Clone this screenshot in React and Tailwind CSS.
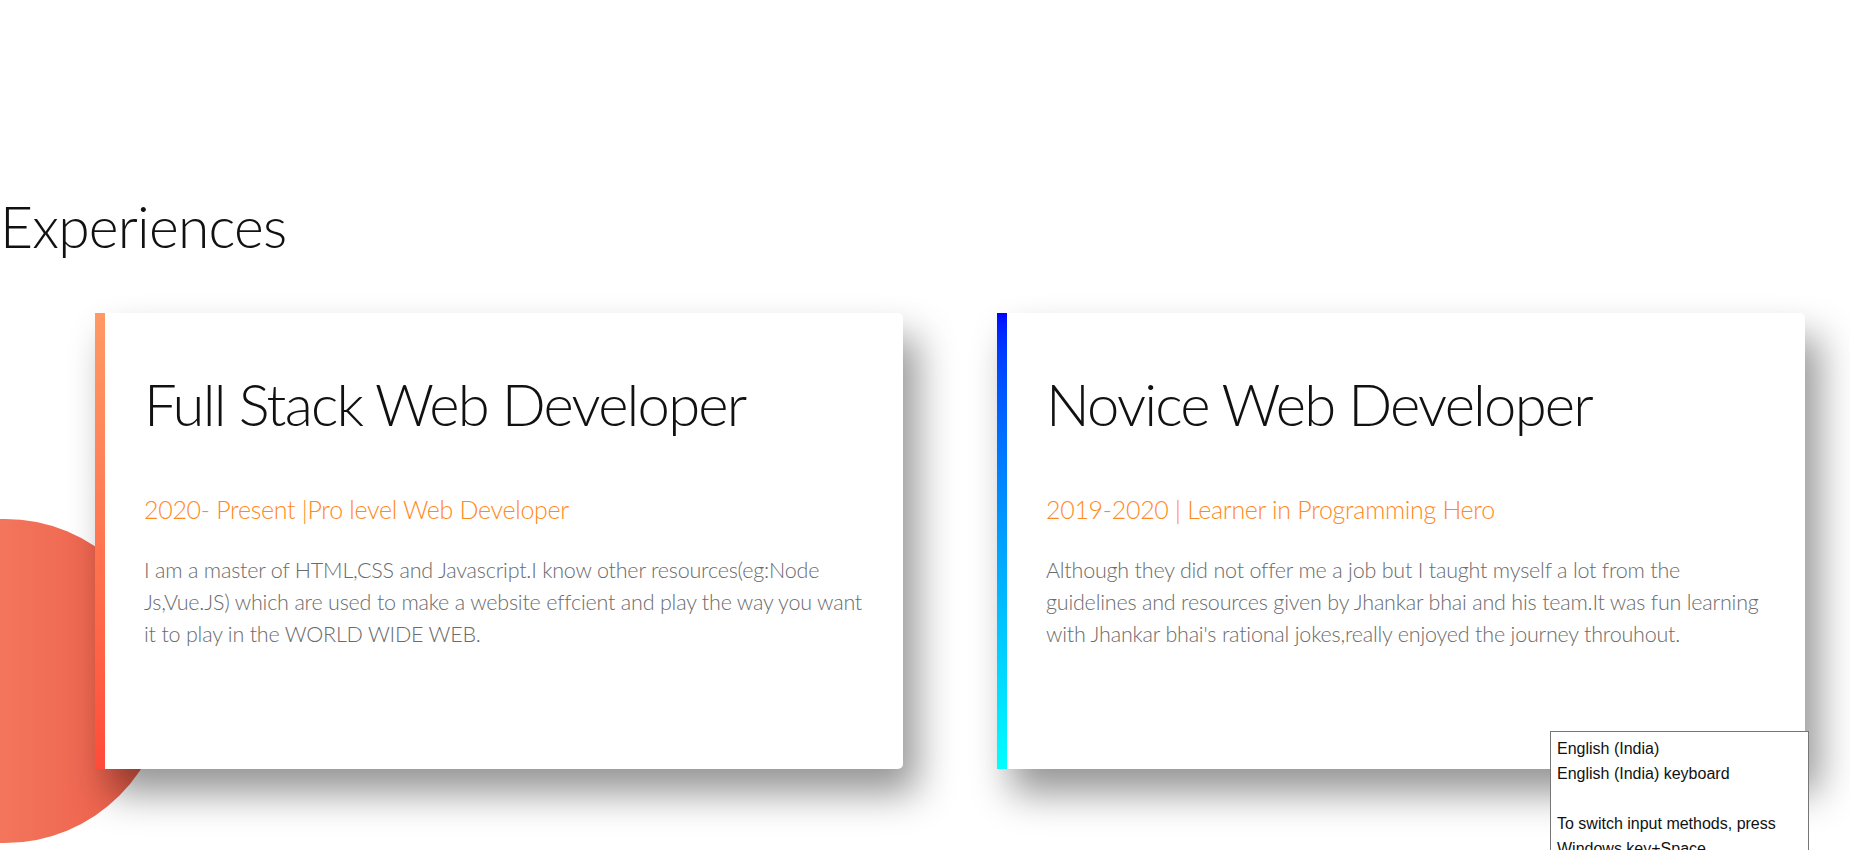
import React from 'react';

const experiences = [
    {
        title: 'Full Stack Web Developer',
        period: '2020- Present |Pro level Web Developer',
        lines: [
            'I am a master of HTML,CSS and Javascript.I know other resources(eg:Node',
            'Js,Vue.JS) which are used to make a website effcient and play the way you want',
            'it to play in the WORLD WIDE WEB.',
        ],
        bar: 'bg-gradient-to-b from-[#ff9966] to-[#ff4b3a]',
    },
    {
        title: 'Novice Web Developer',
        period: '2019-2020 | Learner in Programming Hero',
        lines: [
            'Although they did not offer me a job but I taught myself a lot from the',
            'guidelines and resources given by Jhankar bhai and his team.It was fun learning',
            "with Jhankar bhai's rational jokes,really enjoyed the journey throuhout.",
        ],
        bar: 'bg-gradient-to-b from-[#0000ff] to-[#00ffff]',
    },
];

function ExperienceCard({ item }) {
    return (
        <div className="relative z-10 flex w-[808px] h-[456px] shrink-0 bg-white rounded-r-[5px] shadow-[14px_24px_38px_rgba(0,0,0,0.42)]">
            <div className={`w-[10px] shrink-0 ${item.bar}`}></div>
            <div className="pl-[39px] pt-[56px]">
                <h3 className="text-[58px] leading-[1.2] text-[#111] font-light tracking-[-1.8px]">{item.title}</h3>
                <p className="mt-[55px] text-[25px] leading-[1.2] text-[#ff8a1c] font-light tracking-[-0.3px]">{item.period}</p>
                <div className="mt-[30px] text-[21.5px] leading-[32px] text-[#6b6b6b] font-light tracking-[-0.2px] whitespace-nowrap">
                    {item.lines.map((line) => (
                        <p key={line}>{line}</p>
                    ))}
                </div>
            </div>
        </div>
    );
}

export default function App() {
    return (
        <div className="relative w-full h-[850px] overflow-hidden bg-white font-['Lato',sans-serif]">
            {/* decorative blob */}
            <div className="absolute left-[-157px] top-[519px] w-[324px] h-[324px] rounded-full bg-gradient-to-r from-[#f88d6e] to-[#ec5a48]"></div>

            <div className="pt-[192px]">
                <h2 className="text-[57px] leading-[1.2] font-light text-[#111] tracking-[-0.8px]">Experiences</h2>
            </div>

            <div className="flex gap-[94px] pl-[95px] mt-[53px]">
                {experiences.map((item) => (
                    <ExperienceCard key={item.title} item={item} />
                ))}
            </div>

            {/* input method tooltip */}
            <div className="absolute z-20 left-[1550px] top-[731px] w-[259px] h-[140px] bg-white border border-[#767676] pl-[6px] pt-[4px] font-['Liberation_Sans',sans-serif] text-[16px] leading-[25px] text-[#111]">
                <p>English (India)</p>
                <p>English (India) keyboard</p>
                <p>&nbsp;</p>
                <p>To switch input methods, press</p>
                <p>Windows key+Space.</p>
            </div>
        </div>
    );
}
